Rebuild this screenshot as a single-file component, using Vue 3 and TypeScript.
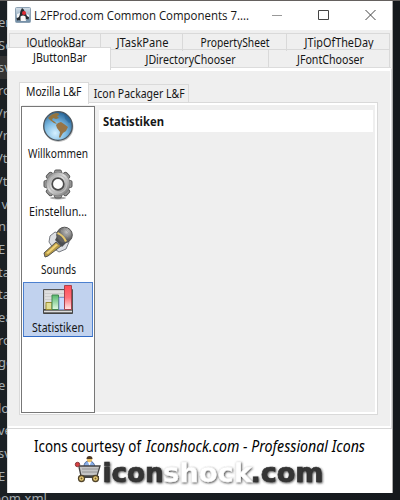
<script setup lang="ts">
interface Label { text: string; width: number }

const editorLines: string[] = ['er', 'Se', 'sv', 'ro', '/r', '/r', '/t', '/t', ' v', 'nit', 'E s', 'ta', 'ta', 'ea', 'ro', 'ge', 'e', 'lo', 've', 'sv', 'E', 'pom.xml']
const backTabs: Label[] = [
  { text: 'JOutlookBar', width: 59 },
  { text: 'JTaskPane', width: 52 },
  { text: 'PropertySheet', width: 69 },
  { text: 'JTipOfTheDay', width: 69 },
]
const buttons: (Label & { id: string })[] = [
  { id: 'globe', text: 'Willkommen', width: 60 },
  { id: 'gear', text: 'Einstellun...', width: 58 },
  { id: 'mic', text: 'Sounds', width: 35 },
  { id: 'chart', text: 'Statistiken', width: 52 },
]
const teeth: number[] = [0, 45, 90, 135, 180, 225, 270, 315]
</script>

<template>
  <main class="desktop">
    <div class="editor"><span v-for="(line, i) in editorLines" :key="i">{{ line }}</span></div>
    <section class="window">
      <header class="titlebar">
        <svg class="java" width="16" height="16" viewBox="0 0 16 16">
          <defs><linearGradient id="jv" x2="0" y2="1"><stop stop-color="#d3dee8" /><stop offset="1" stop-color="#6e8ba4" /></linearGradient></defs>
          <rect x=".5" y=".5" width="15" height="15" rx="1" fill="url(#jv)" stroke="#8da1b3" />
          <path d="M7 1q2 1 3 4l1.500 3.500L14 10l-.5 2.500-2.500-.5-.5 2H5l-.5-1L2 13.500 1.500 11l3-2.500L5.500 4Z" fill="#252a2f" />
          <path d="M5.500 9.500q2.500-2 5 0l.5 4.500H5.500Z" fill="#f8f8f8" /><path d="M2 7l3-1-1 4-2 1zM12 7l2 1v2l-2-1z" fill="#f5f5f5" /><circle cx="9" cy="6" r="2" fill="#df2b35" />
        </svg>
        <svg class="title" width="216" height="22"><text x="0" y="16" textLength="215" lengthAdjust="spacingAndGlyphs">L2FProd.com Common Components 7....</text></svg>
        <svg class="controls" width="112" height="14" viewBox="0 0 112 14" fill="none" stroke="#444">
          <path d="M1 7.500h10" stroke="#999" /><path d="M47.500 2.500h10v9h-10z" /><path d="m94.500 2 10 10m0-10-10 10" />
        </svg>
      </header>

      <nav class="back-tabs">
        <div v-for="tab in backTabs" :key="tab.text" class="tab">
          <svg :width="tab.width" height="16"><text x=".5" y="12" :textLength="tab.width" lengthAdjust="spacingAndGlyphs">{{ tab.text }}</text></svg>
        </div>
      </nav>
      <nav class="front-tabs">
        <div class="tab selected"><svg width="54" height="18"><text x="1" y="12.500" textLength="54" lengthAdjust="spacingAndGlyphs">JButtonBar</text></svg></div>
        <div class="tab"><svg width="90" height="18"><text x=".5" y="12.500" textLength="90" lengthAdjust="spacingAndGlyphs">JDirectoryChooser</text></svg></div>
        <div class="tab"><svg width="67" height="18"><text x="1" y="12.500" textLength="67" lengthAdjust="spacingAndGlyphs">JFontChooser</text></svg></div>
      </nav>

      <div class="content">
        <nav class="inner-tabs">
          <div class="inner-tab active"><svg width="56" height="18"><text y="13" textLength="55.500" lengthAdjust="spacingAndGlyphs">Mozilla L&amp;F</text></svg></div>
          <div class="inner-tab"><svg width="91" height="16"><text x=".7" y="12.500" textLength="91" lengthAdjust="spacingAndGlyphs">Icon Packager L&amp;F</text></svg></div>
        </nav>
        <div class="pane">
          <aside class="buttonbar">
            <button v-for="b in buttons" :key="b.id" type="button" :class="{ chosen: b.id === 'chart' }">
              <svg v-if="b.id === 'globe'" width="32" height="32" viewBox="0 0 32 32">
                <defs><radialGradient id="sea" cx=".4" cy=".75" r=".75"><stop stop-color="#d5f0ff" /><stop offset=".5" stop-color="#7fbce3" /><stop offset="1" stop-color="#28679b" /></radialGradient></defs>
                <circle cx="16.500" cy="17" r="15" fill="#999" opacity=".6" /><circle cx="16" cy="16" r="14.300" fill="url(#sea)" stroke="#4c565e" stroke-width="1.300" />
                <path d="M6 8q3-4 8-5 4 0 3 2l-2 1 2 2-3 1-3-1-1 2 3 2 2 2-3-1-4-3-2-2z" fill="#94743f" />
                <path d="m16 13 3-1 3 2 4 3-2 4-3 2-3 5-1-1 1-5-3-4-1-3z" fill="#987444" />
                <path d="M22 3q5 3 7 9l-2 1-4-4z" fill="#1f5787" opacity=".4" />
              </svg>
              <svg v-else-if="b.id === 'gear'" width="32" height="32" viewBox="0 0 32 32">
                <defs><linearGradient id="steel" x2="1" y2="1"><stop stop-color="#777" /><stop offset=".45" stop-color="#ddd" /><stop offset="1" stop-color="#686868" /></linearGradient></defs>
                <ellipse cx="16" cy="30" rx="8" ry="1.500" fill="#aaa" />
                <g fill="#999" stroke="#555"><rect v-for="a in teeth" :key="a" x="12.500" y="2" width="7" height="7" rx="1.500" :transform="`rotate(${a} 16 16)`" /></g>
                <circle cx="16" cy="16" r="12" fill="url(#steel)" stroke="#777" stroke-width=".7" /><circle cx="16" cy="16" r="9" fill="none" stroke="#bcbcbc" stroke-width="1.200" />
                <circle cx="16" cy="16" r="5.800" fill="#fff" stroke="#4b4b4b" stroke-width="1.700" />
              </svg>
              <svg v-else-if="b.id === 'mic'" width="32" height="32" viewBox="0 0 32 32">
                <defs><radialGradient id="micHead" cx=".65" cy=".3"><stop stop-color="#c5c5c5" /><stop offset="1" stop-color="#626262" /></radialGradient></defs>
                <path d="m13 6-5 4-1 6 4 6 6 4 7-3 3-7-4-7z" fill="#dddfe3" stroke="#777b82" />
                <path d="m13 14 4-7 9 8-6 6z" fill="#4b4e51" /><path d="m2 27 12-11 5 4L6 30l-3 1z" fill="#b69a46" stroke="#555" /><path d="m4 27 10-9 2 1L6 28z" fill="#efd277" />
                <circle cx="22.500" cy="9" r="7.800" fill="url(#micHead)" stroke="#555" />
                <path d="M15 8q5 1 8 8l2-1q-3-6-9-9z" fill="#e5c86d" /><path d="m19 4 7 7m-4-9 6 6m-9-2 7-4m-4 8 7-4" stroke="#999" stroke-width=".6" />
              </svg>
              <svg v-else width="32" height="32" viewBox="0 0 32 32">
                <defs>
                  <linearGradient id="red" y2="1" x2="0"><stop stop-color="#ff4b55" /><stop offset=".5" stop-color="#ff7078" /><stop offset="1" stop-color="#ffe7e9" /></linearGradient>
                  <linearGradient id="green" y2="1" x2="0"><stop stop-color="#54b76b" /><stop offset="1" stop-color="#e4fae5" /></linearGradient>
                </defs>
                <path d="M1.500 5.500h29v22h-29z" fill="#ccc" stroke="#555" /><path d="M3 8h26M3 11h26M3 14h26M3 17h26M3 20h26" stroke="#f1f1f1" />
                <path d="M1.500 25.500h29v4h-29z" fill="#777" stroke="#444" />
                <path d="M4 18.500h6v7H4z" fill="#e1dc92" stroke="#9b8c31" /><path d="M10 11h6.500v14.500H10z" fill="url(#green)" stroke="#428651" />
                <path d="M17 13.500h5.500v12H17z" fill="#c9dcff" stroke="#8198cf" /><path d="M22.500 1.500h7v24h-7z" fill="url(#red)" stroke="#a9424d" />
                <path d="M2 27.500h28" stroke="#ddd" />
              </svg>
              <svg class="caption" :width="b.width" height="16"><text y="12" :textLength="b.width" lengthAdjust="spacingAndGlyphs">{{ b.text }}</text></svg>
            </button>
          </aside>
          <div class="details"><h1><svg width="62" height="18"><text y="13.500" textLength="61" lengthAdjust="spacingAndGlyphs">Statistiken</text></svg></h1></div>
        </div>
      </div>

      <footer>
        <svg width="384" height="62" viewBox="8 429 384 62">
          <defs><filter id="shade" x="-10%" y="-20%" width="120%" height="150%"><feDropShadow dx=".8" dy="1" stdDeviation=".8" flood-color="#333" flood-opacity=".9" /></filter></defs>
          <g class="courtesy"><text x="34" y="451.500" textLength="107" lengthAdjust="spacingAndGlyphs">Icons courtesy of</text><text class="italic" x="146" y="451.500" textLength="219" lengthAdjust="spacingAndGlyphs">Iconshock.com - Professional Icons</text></g>
          <g>
            <path d="M84 467q0-6 5-6t6 6z" fill="#8aafe8" stroke="#4a689b" /><path d="m88 462 1.500 4 1.500-4" fill="#fff" /><circle cx="89.500" cy="459.500" r="2.700" fill="#ecc168" /><path d="M86.500 459q0-3 3-3t3 3z" fill="#4e3925" />
            <path d="m79 467 2 9h16l3-10H79" fill="#c5c5c5" stroke="#444" stroke-width="1.300" />
            <path d="M82 469h16M82 472h15" stroke="#888" stroke-width=".8" /><path d="M80 477h19" stroke="#444" stroke-width="2" />
            <circle cx="77.500" cy="464.500" r="2.200" fill="#d93f42" stroke="#87383a" />
            <circle cx="81.500" cy="478.500" r="3" fill="#f0d177" stroke="#51442a" stroke-width="1.300" /><circle cx="95.500" cy="478.500" r="3" fill="#f0d177" stroke="#51442a" stroke-width="1.300" /><circle cx="81.500" cy="478.500" r="1" fill="#705c31" /><circle cx="95.500" cy="478.500" r="1" fill="#705c31" />
          </g>
          <g class="brand" filter="url(#shade)"><text x="102.500" y="482" textLength="61" lengthAdjust="spacingAndGlyphs">icon</text><text class="pale" x="163" y="482" textLength="89" lengthAdjust="spacingAndGlyphs">shock</text><text x="250.500" y="482" textLength="73" lengthAdjust="spacingAndGlyphs">.com</text></g>
        </svg>
      </footer>
    </section>
  </main>
</template>

<style>body { margin: 0; overflow: hidden; }</style>
<style scoped>
* { box-sizing: border-box; }
.desktop { position: relative; width: 400px; height: 500px; overflow: hidden; background: linear-gradient(90deg, #1b2024, #15191d); }
.desktop::before { content: ""; display: block; height: 1px; background: #65615f; }
.editor { display: flex; flex-direction: column; padding-top: 10px; color: #a5acaf; font: 13px/22.700px "Noto Sans", sans-serif; }
.editor span { height: 22.700px; width: 60px; flex: none; white-space: pre; text-indent: -2px; }
.editor span:nth-child(3) { background: #343434; }
.editor span:last-child { text-indent: -7px; }
.window { position: absolute; left: 7px; top: 1px; width: 386px; height: 492px; background: #efefef; border-left: 1px solid #ddd; border-right: 1px solid #aaa; display: flex; flex-direction: column; }
svg { display: block; flex: none; overflow: visible; }
text { font-family: "Noto Sans", sans-serif; font-size: 11.800px; fill: #161616; }
.titlebar { height: 29px; flex: none; background: white; display: flex; align-items: center; padding: 0 0 1px 7px; }
.title { margin-left: 3px; }
.title text { font-family: "Open Sans", sans-serif; font-size: 13.200px; }
.controls { margin-left: 21px; }
.back-tabs { margin: 3px 1px 0; height: 16px; flex: none; display: grid; grid-template-columns: 91px 82px 104px 104px; }
.back-tabs .tab { border-top: 1px solid #d9d9d9; border-left: 1px solid #d9d9d9; display: flex; justify-content: center; padding-top: 1px; }
.back-tabs .tab:last-child { border-right: 1px solid #d9d9d9; }
.front-tabs { height: 19px; flex: none; display: grid; grid-template-columns: 103px 158px 121px; }
.front-tabs .tab { border-top: 1px solid #d9d9d9; border-right: 1px solid #d9d9d9; display: flex; justify-content: center; padding-top: 1px; }
.front-tabs .selected { background: white; margin-top: -2px; height: 23px; z-index: 1; }
.content { height: 360px; flex: none; margin-right: 1px; border: solid white; border-width: 3px 1px 2px 0; box-shadow: 1px 1px #dcdcdc, 0 -1px #dcdcdc; padding: 11px 12px 0 11px; }
.inner-tabs { height: 20px; display: flex; align-items: flex-end; }
.inner-tab { height: 18px; width: 100px; border: 1px solid #dadada; border-left: 0; border-bottom: 0; display: flex; align-items: flex-start; justify-content: center; }
.inner-tab.active { height: 22px; width: 70px; background: white; border-left: 1px solid #ddd; margin-bottom: -2px; z-index: 1; }
.pane { height: 313px; border: 1px solid #d9d9d9; box-shadow: inset 0 0 0 2px white; padding: 3px 4px 1px 1px; display: flex; }
.buttonbar { width: 74px; height: 307px; border: 1px solid #777; background: white; padding: 1px; flex: none; }
button { display: flex; flex-direction: column; align-items: center; width: 70px; height: 55px; margin: 0 0 3px; padding: 1px 0 0; border: 1px solid transparent; background: transparent; }
button.chosen { background: #c1d2ee; border-color: #4c80cf; border-bottom-color: #316ac5; }
.caption { margin-top: 4px; }
.details { flex: 1; padding: 4px 0 0 4px; }
h1 { margin: 0; height: 22px; padding: 2px 4px; background: white; }
h1 text { font-weight: 700; }
footer { flex: 1; background: white; border-top: 1px solid #d7d7d7; }
.courtesy text { font-size: 16px; fill: black; }
.courtesy .italic { font-style: italic; }
.brand text { font: 700 26px "DejaVu Sans", sans-serif; fill: #343434; stroke: #343434; stroke-width: .7px; }
.brand .pale { fill: white; stroke: #eee; stroke-width: .3px; }
</style>
